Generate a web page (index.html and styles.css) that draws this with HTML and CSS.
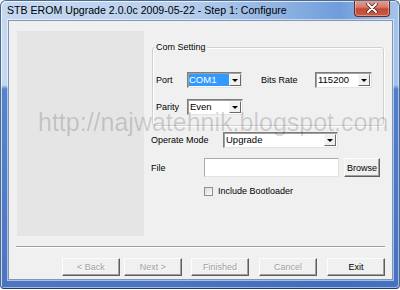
FILE: index.html
```html
<!DOCTYPE html>
<html>
<head>
<meta charset="utf-8">
<link rel="stylesheet" href="styles.css">
</head>
<body>
<div class="window">
  <div class="titlebar">
    <span class="title">STB EROM Upgrade 2.0.0c 2009-05-22 - Step 1: Configure</span>
    <div class="close">
      <svg width="14" height="10" viewBox="0 0 14 10"><path d="M3 1 L11 9 M11 1 L3 9" stroke="#3a2020" stroke-width="3.4" stroke-linecap="round"/><path d="M3 1 L11 9 M11 1 L3 9" stroke="#ffffff" stroke-width="2" stroke-linecap="round"/></svg>
    </div>
  </div>
  <div class="client">
    <div class="main">
      <div class="sidepanel"></div>
      <div class="form">
        <fieldset class="group">
          <legend>Com Setting</legend>
          <div class="grow r1">
            <span class="lbl w-port">Port</span>
            <div class="combo w55"><span class="val sel">COM1</span><span class="drop"><i></i></span></div>
            <span class="lbl w-bits">Bits Rate</span>
            <div class="combo w57"><span class="val">115200</span><span class="drop"><i></i></span></div>
          </div>
          <div class="grow r2">
            <span class="lbl w-port">Parity</span>
            <div class="combo w56"><span class="val">Even</span><span class="drop"><i></i></span></div>
          </div>
        </fieldset>
        <div class="row op">
          <span class="lbl w-op">Operate Mode</span>
          <div class="combo w115"><span class="val">Upgrade</span><span class="drop"><i></i></span></div>
        </div>
        <div class="row file">
          <span class="lbl w-file">File</span>
          <div class="textbox"></div>
          <div class="btn browse">Browse</div>
        </div>
        <div class="row chk">
          <span class="checkbox"></span>
          <span class="lbl">Include Bootloader</span>
        </div>
      </div>
    </div>
    <div class="sep"></div>
    <div class="buttons">
      <div class="btn wiz dis">&lt; Back</div>
      <div class="btn wiz dis next">Next &gt;</div>
      <div class="btn wiz dis fin">Finished</div>
      <div class="btn wiz dis gap">Cancel</div>
      <div class="btn wiz gap">Exit</div>
    </div>
  </div>
  <div class="watermark">http://najwatehnik.blogspot.com</div>
</div>
</body>
</html>
```
FILE: styles.css
```css
html, body { margin: 0; padding: 0; }
body { width: 400px; height: 290px; overflow: hidden; background: #ffffff; font-family: "Liberation Sans", Arial, sans-serif; }

.window {
  position: relative;
  width: 400px; height: 289px;
  box-sizing: border-box;
  padding: 0 6px 8px 7px;
  display: flex; flex-direction: column;
  border: 1px solid #4c6a90;
  border-bottom-color: #24406a;
  border-radius: 6px 6px 4px 4px;
  background:
    linear-gradient(to bottom, rgba(60,110,195,0) 0, rgba(60,110,195,0) 84px, rgba(60,110,195,0.8) 88px, rgba(55,100,185,0.85) 100%),
    linear-gradient(to right, #c4d8f0 0, #b9d0ee 45%, #8fb3e2 70%, #6f9ddb 85%, #a7c4ea 100%);
  box-shadow: inset 1px 1px 0 rgba(255,255,255,0.7), inset -1px -1px 0 rgba(255,255,255,0.5);
  overflow: hidden;
}

.titlebar {
  height: 20px; flex: none;
  display: flex; align-items: flex-start; justify-content: space-between;
  margin: -1px -1px 0 -1px;
}
.title {
  font-family: "Liberation Sans", Arial, sans-serif;
  font-size: 10.6px;
  color: #000;
  margin: 4px 0 0 0;
  line-height: 13px;
}
.close {
  width: 36px; height: 17px;
  margin-right: 4px;
  box-sizing: border-box;
  border: 1px solid #6b2a2a;
  border-top: none;
  border-radius: 0 0 4px 4px;
  background: linear-gradient(to bottom, #e8a493 0, #d47a6a 45%, #c34a36 55%, #c85a3f 100%);
  display: flex; align-items: center; justify-content: center;
  box-shadow: inset 0 0 0 1px rgba(255,255,255,0.35);
}

.client {
  flex: 1;
  background: #f0f0f0;
  border: 1px solid #7f96b6;
  box-shadow: 0 0 0 1px rgba(255,255,255,0.55);
  display: flex; flex-direction: column;
}

.main { display: flex; padding: 10px 0 0 8px; }
.sidepanel { width: 127px; height: 205px; background: #e5e5e5; flex: none; }
.form { margin-left: 7px; padding-top: 10px; width: 233px; font-size: 9px; color: #000; }

.group {
  margin: 0 0 0 1px; padding: 0 0 10px 3px;
  width: 232px; box-sizing: border-box;
  border: 1px solid #d0d0d0;
  border-radius: 3px;
  box-shadow: inset 1px 1px 0 #fff, 1px 1px 0 #fff;
}
.group legend { padding: 0 1px; margin-left: -1px; line-height: 12px; font-size: 9px; }

.grow, .row { display: flex; align-items: center; }
.r1 { margin-top: 19px; height: 16px; }
.r2 { margin-top: 11px; height: 16px; }
.lbl { display: inline-block; white-space: nowrap; line-height: 10px; }
.w-port { width: 31px; margin-left: 0; }
.w-bits { width: 54px; margin-left: 19px; }

.combo {
  height: 16px; box-sizing: border-box;
  background: #fff;
  border: 1px solid; border-color: #7c7c7c #e3e3e3 #e3e3e3 #7c7c7c;
  box-shadow: inset 1px 1px 0 #a0a0a0;
  display: flex; align-items: stretch;
  padding: 1px;
}
.w55 { width: 55px; } .w56 { width: 56px; } .w57 { width: 57px; } .w115 { width: 115px; }
.val { flex: 1; padding-left: 1px; line-height: 10px; font-size: 9.5px; align-self: center; }
.val.sel { background: #3399ff; color: #fff; flex: none; width: 40px; margin-right: auto; padding-left: 0; align-self: stretch; display: flex; align-items: center; }
.drop {
  width: 12px; flex: none; margin-left: auto; box-sizing: border-box;
  background: #f0f0f0;
  border: 1px solid; border-color: #f8f8f8 #6a6a6a #6a6a6a #f8f8f8;
  display: flex; align-items: center; justify-content: center;
}
.drop i { width: 0; height: 0; border-left: 3px solid transparent; border-right: 3px solid transparent; border-top: 3px solid #000; margin-top: 1px; }

.op { margin-top: 6px; height: 16px; }
.w-op { width: 72px; }
.file { margin-top: 10px; height: 19px; }
.w-file { width: 53px; }
.textbox {
  width: 135px; height: 19px; box-sizing: border-box; background: #fff;
  border: 1px solid; border-color: #ababab #e3e3e3 #e3e3e3 #ababab;
}
.btn {
  box-sizing: border-box; display: flex; align-items: center; justify-content: center;
  background: #f0f0f0;
  border: 1px solid; border-color: #fdfdfd #5f5f5f #5f5f5f #fdfdfd;
  box-shadow: inset -1px -1px 0 #a0a0a0;
  font-size: 9px; color: #000;
}
.browse { width: 36px; height: 19px; margin-left: 5px; }
.chk { margin-top: 9px; height: 10px; }
.checkbox {
  width: 9px; height: 9px; box-sizing: border-box; margin-left: 53px; margin-right: 5px;
  border: 1px solid #8f8f8f;
  background: linear-gradient(135deg, #dcdcdc, #fbfbfb);
}

.sep { margin: 10px 7px 0 7px; height: 0; border-top: 1px solid #a0a0a0; border-bottom: 1px solid #fff; }
.buttons { display: flex; justify-content: flex-end; padding: 10px 7px 0 0; }
.wiz { width: 58px; height: 18px; }
.next { margin-left: 4px; }
.fin { margin-left: 9px; }
.gap { margin-left: 10px; }
.dis { color: #a0a0a0; text-shadow: 1px 1px 0 #fff; }

.watermark {
  position: absolute; left: 37px; top: 112px;
  font-family: "Liberation Sans", Arial, sans-serif;
  font-size: 25px; line-height: 19px;
  color: rgba(0,0,0,0.16);
  white-space: nowrap;
  pointer-events: none;
}
```
